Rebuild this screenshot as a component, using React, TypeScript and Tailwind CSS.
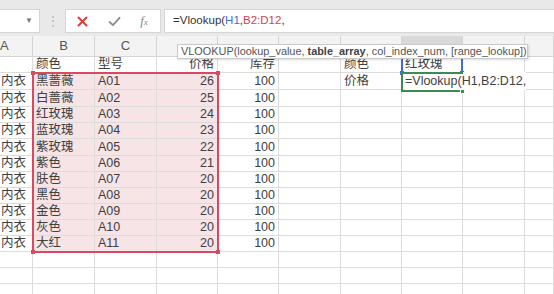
import React from 'react';

const widths = [33, 62, 62, 61, 61, 62, 61, 61, 62, 29];
const widthCss = [
    'w-[33px]',
    'w-[62px]',
    'w-[62px]',
    'w-[61px]',
    'w-[61px]',
    'w-[62px]',
    'w-[61px]',
    'w-[61px]',
    'w-[62px]',
    'w-[29px]',
];
// letters under the tooltip are hidden in the screenshot
const letters = ['A', 'B', 'C', '', '', '', '', '', '', ''];

// row heights follow the screenshot (rows drift between 16 and 17px)
const tall = [false, true, true, false, false, true, false, false, false, false, false, false, false, false, false];

const items = [
    ['黑蔷薇', 'A01', '26'],
    ['白蔷薇', 'A02', '25'],
    ['红玫瑰', 'A03', '24'],
    ['蓝玫瑰', 'A04', '23'],
    ['紫玫瑰', 'A05', '22'],
    ['紫色', 'A06', '21'],
    ['肤色', 'A07', '20'],
    ['黑色', 'A08', '20'],
    ['金色', 'A09', '20'],
    ['灰色', 'A10', '20'],
    ['大红', 'A11', '20'],
];

const rows: string[][] = [
    ['', '颜色', '型号', '价格', '库存', '', '颜色', '红玫瑰', '', ''],
    ...items.map((it, i) => [
        '内衣',
        it[0],
        it[1],
        it[2],
        '100',
        '',
        i === 0 ? '价格' : '',
        '',
        '',
        '',
    ]),
    ['', '', '', '', '', '', '', '', '', ''],
    ['', '', '', '', '', '', '', '', '', ''],
    ['', '', '', '', '', '', '', '', '', ''],
];

const font = { fontFamily: '"Liberation Sans", "Noto Sans CJK SC", sans-serif' };

const Cell = ({ r, c, v }: { r: number; c: number; v: string }) => {
    const pink = r >= 1 && r <= 11 && c >= 1 && c <= 3;
    const right = c === 3 || c === 4;
    return (
        <div
            className={`${widthCss[c]} shrink-0 h-full border-r border-b border-[#dcdcdc] flex items-center overflow-hidden whitespace-nowrap ${
                pink ? 'bg-[#f6e4e6]' : 'bg-white'
            } ${right ? 'justify-end pr-[3px]' : c === 0 ? 'pl-[1px]' : 'pl-[3px]'}`}
        >
            {v}
        </div>
    );
};

const App = () => {
    return (
        <div className="relative w-[554px] h-[294px] overflow-hidden bg-white text-[#404040]" style={font}>
            {/* formula bar */}
            <div className="h-[36px] bg-[#e9e9e9] flex items-start pt-[9px] gap-0">
                <div className="w-[40px] h-[24px] bg-white border border-l-0 border-[#d6d6d6] flex items-center justify-end pr-[6px]">
                    <span className="text-[8px] text-[#777]">▼</span>
                </div>
                <div className="w-[25px] h-[24px] flex items-center justify-center text-[#b5b5b5] text-[12px]">⋮</div>
                <div className="w-[96px] h-[24px] bg-white border border-[#d6d6d6] flex items-center">
                    <div className="w-[30px] flex justify-center ml-[1px]">
                        <svg width="11" height="11" viewBox="0 0 11 11">
                            <path d="M1.5 1.5 L9.5 9.5 M9.5 1.5 L1.5 9.5" stroke="#d8403b" strokeWidth="2" strokeLinecap="round" />
                        </svg>
                    </div>
                    <div className="w-[34px] flex justify-center">
                        <svg width="13" height="11" viewBox="0 0 13 11">
                            <path d="M1.5 6 L5 9.2 L11.5 1.8" stroke="#8c8c8c" strokeWidth="1.8" fill="none" strokeLinecap="round" strokeLinejoin="round" />
                        </svg>
                    </div>
                    <div className="w-[26px] flex justify-center text-[#8a8a8a] italic text-[13px]" style={{ fontFamily: '"Liberation Serif", serif' }}>
                        f<span className="text-[9px] mt-[5px]">x</span>
                    </div>
                </div>
                <div className="w-[3px]" />
                <div className="flex-1 h-[24px] bg-white border border-r-0 border-[#d6d6d6] flex items-center pl-[8px] text-[11.5px] text-[#333]">
                    <span>=Vlookup(</span>
                    <span className="text-[#3f6fd0]">H1</span>
                    <span>,</span>
                    <span className="text-[#cf3f55]">B2:D12</span>
                    <span>,</span>
                </div>
            </div>

            {/* column headers */}
            <div className="h-[21px] flex bg-[#f3f3f3] text-[13px] text-[#555]">
                {widths.map((w, c) => (
                    <div
                        key={c}
                        className={`${widthCss[c]} shrink-0 h-full border-r border-b border-[#d4d4d4] flex items-center ${
                            c === 0 ? 'justify-start pl-[0px]' : 'justify-center'
                        } ${c === 7 ? 'bg-[#d9d9d9]' : ''}`}
                    >
                        {letters[c]}
                    </div>
                ))}
            </div>

            {/* grid */}
            <div className="flex flex-col text-[12.5px]">
                {rows.map((row, r) => (
                    <div key={r} className={`flex shrink-0 ${tall[r] ? 'h-[17px]' : 'h-[16px]'}`}>
                        {row.map((v, c) =>
                            r === 1 && c === 7 ? (
                                <div
                                    key={c}
                                    className="w-[61px] shrink-0 h-full border-b border-[#dcdcdc] bg-white flex items-center pl-[3px] whitespace-nowrap overflow-visible relative z-10"
                                >
                                    <span className="bg-white">=Vlookup(H1,B2:D12,</span>
                                </div>
                            ) : r === 1 && c === 8 ? (
                                <div key={c} className="w-[62px] shrink-0 h-full border-b border-[#dcdcdc] bg-white" />
                            ) : (
                                <Cell key={c} r={r} c={c} v={v} />
                            )
                        )}
                    </div>
                ))}
            </div>

            {/* selected range B2:D12 */}
            <div className="absolute left-[32px] top-[72px] w-[187px] h-[181px] border-2 border-[#d74a62]" />
            <div className="absolute left-[31px] top-[71px] w-[4px] h-[4px] bg-[#d74a62]" />
            <div className="absolute left-[216px] top-[71px] w-[4px] h-[4px] bg-[#d74a62]" />
            <div className="absolute left-[31px] top-[250px] w-[4px] h-[4px] bg-[#d74a62]" />
            <div className="absolute left-[216px] top-[250px] w-[4px] h-[4px] bg-[#d74a62]" />

            {/* H1 reference marker */}
            <div className="absolute left-[401px] top-[57px] w-[2px] h-[16px] bg-[#3e6fd2]" />
            <div className="absolute left-[461px] top-[57px] w-[2px] h-[16px] bg-[#3e6fd2]" />
            <div className="absolute left-[400px] top-[71px] w-[4px] h-[4px] bg-[#3e6fd2]" />
            <div className="absolute left-[460px] top-[71px] w-[4px] h-[4px] bg-[#3e6fd2]" />

            {/* active cell H2 */}
            <div className="absolute left-[401px] top-[72px] w-[62px] h-[20px] border-2 border-r-0 border-[#3d8a52] z-20" />
            <div className="absolute left-[460px] top-[89px] w-[5px] h-[5px] bg-[#3d8a52] border border-white z-20" />

            {/* function tooltip */}
            <div className="absolute left-[177px] top-[44px] w-[351px] h-[15px] bg-white border border-[#c9c9c9] shadow-[1px_1px_2px_rgba(0,0,0,0.15)] flex items-center pl-[3px] text-[10.9px] text-[#555] whitespace-nowrap z-30">
                VLOOKUP(lookup_value,&nbsp;<b className="font-bold text-[#444]">table_array</b>, col_index_num, [range_lookup])
            </div>
        </div>
    );
};

export default App;
